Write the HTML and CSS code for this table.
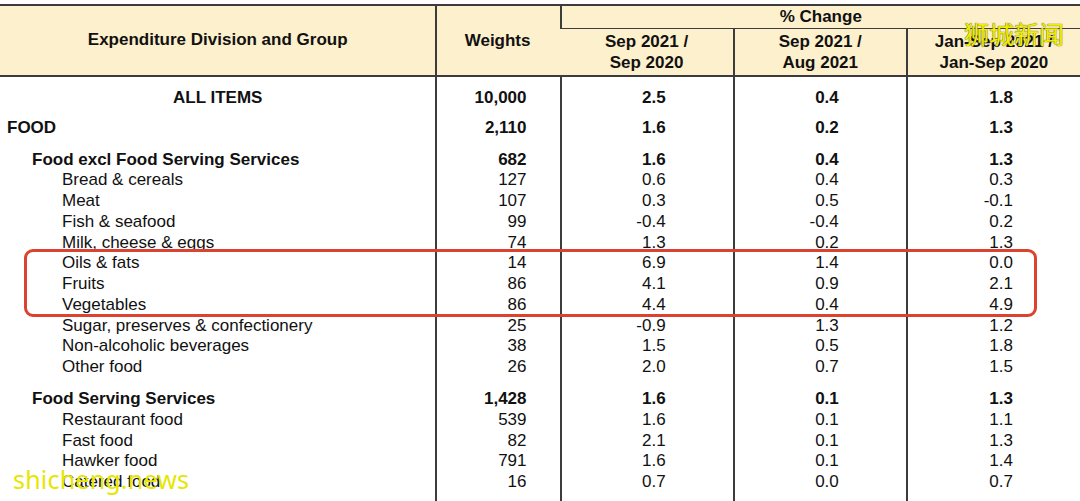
FILE: index.html
```html
<!DOCTYPE html>
<html>
<head>
<meta charset="utf-8">
<link rel="stylesheet" href="styles.css">
</head>
<body>
<div class="page">
  <table class="cpi">
    <colgroup>
      <col class="c-name"><col class="c-weight"><col class="c-chg"><col class="c-chg"><col class="c-chg">
    </colgroup>
    <thead>
      <tr class="h1">
        <th rowspan="2" class="name-h">Expenditure Division and Group</th>
        <th rowspan="2" class="weight-h">Weights</th>
        <th colspan="3" class="pct-h">% Change</th>
      </tr>
      <tr class="h2">
        <th class="sub-h">Sep 2021 /<br>Sep 2020</th>
        <th class="sub-h">Sep 2021 /<br>Aug 2021</th>
        <th class="sub-h">Jan-Sep 2021 /<br>Jan-Sep 2020</th>
      </tr>
    </thead>
    <tbody>
      <tr class="bold gap-a"><td class="name center">ALL ITEMS</td><td class="w">10,000</td><td class="v">2.5</td><td class="v">0.4</td><td class="v">1.8</td></tr>
      <tr class="bold gap-b"><td class="name l0">FOOD</td><td class="w">2,110</td><td class="v">1.6</td><td class="v">0.2</td><td class="v">1.3</td></tr>
      <tr class="bold gap-c"><td class="name l1">Food excl Food Serving Services</td><td class="w">682</td><td class="v">1.6</td><td class="v">0.4</td><td class="v">1.3</td></tr>
      <tr><td class="name l2">Bread &amp; cereals</td><td class="w">127</td><td class="v">0.6</td><td class="v">0.4</td><td class="v">0.3</td></tr>
      <tr><td class="name l2">Meat</td><td class="w">107</td><td class="v">0.3</td><td class="v">0.5</td><td class="v">-0.1</td></tr>
      <tr><td class="name l2">Fish &amp; seafood</td><td class="w">99</td><td class="v">-0.4</td><td class="v">-0.4</td><td class="v">0.2</td></tr>
      <tr><td class="name l2">Milk, cheese &amp; eggs</td><td class="w">74</td><td class="v">1.3</td><td class="v">0.2</td><td class="v">1.3</td></tr>
      <tr><td class="name l2">Oils &amp; fats</td><td class="w">14</td><td class="v">6.9</td><td class="v">1.4</td><td class="v">0.0</td></tr>
      <tr><td class="name l2">Fruits</td><td class="w">86</td><td class="v">4.1</td><td class="v">0.9</td><td class="v">2.1</td></tr>
      <tr><td class="name l2">Vegetables</td><td class="w">86</td><td class="v">4.4</td><td class="v">0.4</td><td class="v">4.9</td></tr>
      <tr><td class="name l2">Sugar, preserves &amp; confectionery</td><td class="w">25</td><td class="v">-0.9</td><td class="v">1.3</td><td class="v">1.2</td></tr>
      <tr><td class="name l2">Non-alcoholic beverages</td><td class="w">38</td><td class="v">1.5</td><td class="v">0.5</td><td class="v">1.8</td></tr>
      <tr><td class="name l2">Other food</td><td class="w">26</td><td class="v">2.0</td><td class="v">0.7</td><td class="v">1.5</td></tr>
      <tr class="bold gap-c"><td class="name l1">Food Serving Services</td><td class="w">1,428</td><td class="v">1.6</td><td class="v">0.1</td><td class="v">1.3</td></tr>
      <tr><td class="name l2">Restaurant food</td><td class="w">539</td><td class="v">1.6</td><td class="v">0.1</td><td class="v">1.1</td></tr>
      <tr><td class="name l2">Fast food</td><td class="w">82</td><td class="v">2.1</td><td class="v">0.1</td><td class="v">1.3</td></tr>
      <tr><td class="name l2">Hawker food</td><td class="w">791</td><td class="v">1.6</td><td class="v">0.1</td><td class="v">1.4</td></tr>
      <tr><td class="name l2">Catered food</td><td class="w">16</td><td class="v">0.7</td><td class="v">0.0</td><td class="v">0.7</td></tr>
      <tr class="filler"><td></td><td></td><td></td><td></td><td></td></tr>
    </tbody>
  </table>
  <div class="highlight"></div>
  <div class="wm-cn">狮城新闻</div>
  <div class="wm-en">shicheng.news</div>
</div>
</body>
</html>
```

FILE: styles.css
```css
html, body {
  margin: 0;
  padding: 0;
  background: #ffffff;
}
body {
  width: 1080px;
  height: 501px;
  overflow: hidden;
  font-family: "Liberation Sans", Arial, sans-serif;
  color: #111;
}
.page {
  position: relative;
  width: 1080px;
  height: 501px;
  padding-top: 4px;
  box-sizing: border-box;
  overflow: hidden;
}
.cpi {
  width: 1080px;
  table-layout: fixed;
  border-collapse: collapse;
  font-size: 17px;
}
.c-name { width: 436px; }
.c-weight { width: 124px; }
.c-chg { width: 173px; }
.cpi th, .cpi td {
  padding: 0;
  border-left: 2px solid #3c3c3c;
}
.cpi th:first-child, .cpi td:first-child { border-left: none; }
thead th {
  background: #fdf0cd;
  font-weight: bold;
  text-align: center;
  vertical-align: middle;
}
.h1 th { border-top: 2px solid #3c3c3c; }
.pct-h {
  height: 22px;
  line-height: 20px;
  border-bottom: 1.5px solid #3c3c3c;
}
.h2 th {
  border-bottom: 2px solid #3c3c3c;
  height: 46px;
  line-height: 21px;
}
.name-h, .weight-h { border-bottom: 2px solid #3c3c3c; }
.weight-h { text-align: right; padding-right: 29px !important; }
.name-h { padding-bottom: 1px !important; }

tbody td {
  line-height: 20.75px;
  height: 20.75px;
  vertical-align: bottom;
  white-space: nowrap;
}
.bold td { font-weight: bold; }
.gap-a td { padding-top: 10.67px; }
.gap-b td { padding-top: 9.33px; }
.gap-c td { padding-top: 11.2px; }
.name.center { text-align: center; }
.l0 { padding-left: 7px !important; }
.l1 { padding-left: 32px !important; }
.l2 { padding-left: 62px !important; }
.w { text-align: right; padding-right: 33px !important; }
.v { text-align: right; padding-right: 67px !important; }
.filler td { height: 20px; }

.highlight {
  position: absolute;
  left: 24px;
  top: 249px;
  width: 1013px;
  height: 68px;
  box-sizing: border-box;
  border: 3.5px solid #db4230;
  border-radius: 9px;
}
.wm-cn {
  position: absolute;
  left: 964px;
  top: 17px;
  font-family: "Noto Sans CJK SC", sans-serif;
  font-size: 25px;
  line-height: 32px;
  color: #f3ee00;
  text-shadow: 0 0 1px #6b6b20, 0 0 1px #6b6b20;
}
.wm-en {
  position: absolute;
  left: 13px;
  top: 461px;
  font-family: "Noto Sans", sans-serif;
  font-size: 25px;
  line-height: 36px;
  color: #e6e600;
  letter-spacing: 0.2px;
}
```
